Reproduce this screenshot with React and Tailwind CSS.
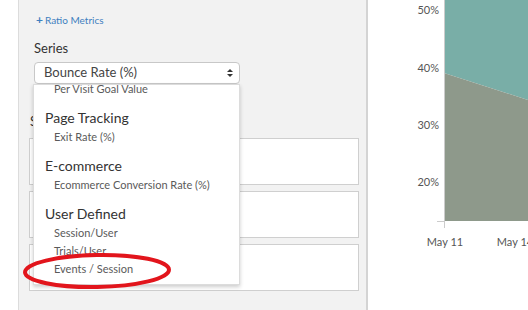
import React from "react";

const font = { fontFamily: "Lato, 'Open Sans', sans-serif" };

function Box() {
  return <div className="h-[47px] border border-[#cfcfcf] bg-white" />;
}

function Item({ children }) {
  return <div className="h-[18px] pl-[20px] text-[11px] leading-[18px] text-[#5a5a5a]">{children}</div>;
}

function Header({ children }) {
  return <div className="mt-[10px] h-[20px] pl-[11px] text-[14px] leading-[20px] text-[#333]">{children}</div>;
}

export default function App() {
  return (
    <div className="flex h-[310px] w-[528px] overflow-hidden bg-white" style={font}>
      <div className="w-[18px] shrink-0 bg-white" />
      <div className="relative flex w-[350px] shrink-0 flex-col border-l border-r-2 border-l-[#dcdcdc] border-r-[#d4d4d4] bg-[#f2f2f2] pl-[10px] pr-[7px]">
        <div className="mt-[13px] flex items-center pl-[7px] text-[10px] leading-[14px] text-[#3f80c0]">
          <span className="mr-[2px] text-[12px] font-bold leading-[14px]">+</span>
          <span>Ratio Metrics</span>
        </div>
        <div className="mt-[13px] pl-[5px] text-[13px] leading-[16px] text-[#333]">Series</div>
        <div className="relative ml-[5px] mt-[6px] w-[206px]">
          <div className="flex h-[22px] items-center justify-between rounded-[4px] border border-[#c8c8c8] bg-white pl-[9px] pr-[6px] text-[13px] text-[#444]">
            <span>Bounce Rate (%)</span>
            <svg width="6" height="10" viewBox="0 0 6 10">
              <path d="M0 4 L3 1 L6 4 Z" fill="#333" />
              <path d="M0 6 L3 9 L6 6 Z" fill="#333" />
            </svg>
          </div>
          <div className="absolute left-[-1px] top-[22px] z-10 h-[201px] w-[207px] overflow-hidden border border-[#dcdcdc] bg-white shadow-[0_2px_4px_rgba(0,0,0,0.2)]">
            <div className="-mt-[5px]">
              <Item>Per Visit Goal Value</Item>
              <Header>Page Tracking</Header>
              <Item>Exit Rate (%)</Item>
              <Header>E-commerce</Header>
              <Item>Ecommerce Conversion Rate (%)</Item>
              <Header>User Defined</Header>
              <Item>Session/User</Item>
              <Item>Trials/User</Item>
              <Item>Events / Session</Item>
            </div>
          </div>
        </div>
        <div className="mt-[29px] pl-[1px] text-[13px] leading-[16px] text-[#333]">Series</div>
        <div className="mt-[9px] flex flex-col gap-[6px]">
          <Box />
          <Box />
          <Box />
        </div>
        <svg className="absolute left-[2px] top-[252px] z-20" width="152" height="38" viewBox="0 0 152 38">
          <ellipse cx="76" cy="19" rx="72" ry="16" fill="none" stroke="#e2151c" strokeWidth="4" transform="rotate(-1 76 19)" />
        </svg>
      </div>
      <div className="relative flex-1">
        <svg width="160" height="310" viewBox="0 0 160 310" className="block">
          <polygon points="76,0 160,0 160,100 76,73" fill="#79aea7" />
          <polygon points="76,73 160,100 160,221 76,221" fill="#8e998b" />
          <line x1="76.5" y1="0" x2="76.5" y2="228" stroke="#ccc" strokeWidth="1" />
          <line x1="69" y1="221.5" x2="77" y2="221.5" stroke="#ccc" strokeWidth="1" />
          <g fontFamily="Lato, sans-serif" fontSize="11" fill="#555" textAnchor="end">
            <text x="71" y="14">50%</text>
            <text x="71" y="72">40%</text>
            <text x="71" y="129">30%</text>
            <text x="71" y="186">20%</text>
          </g>
          <g fontFamily="Lato, sans-serif" fontSize="11" fill="#555" textAnchor="middle">
            <text x="77" y="246">May 11</text>
            <text x="147" y="246">May 14</text>
          </g>
        </svg>
      </div>
    </div>
  );
}
